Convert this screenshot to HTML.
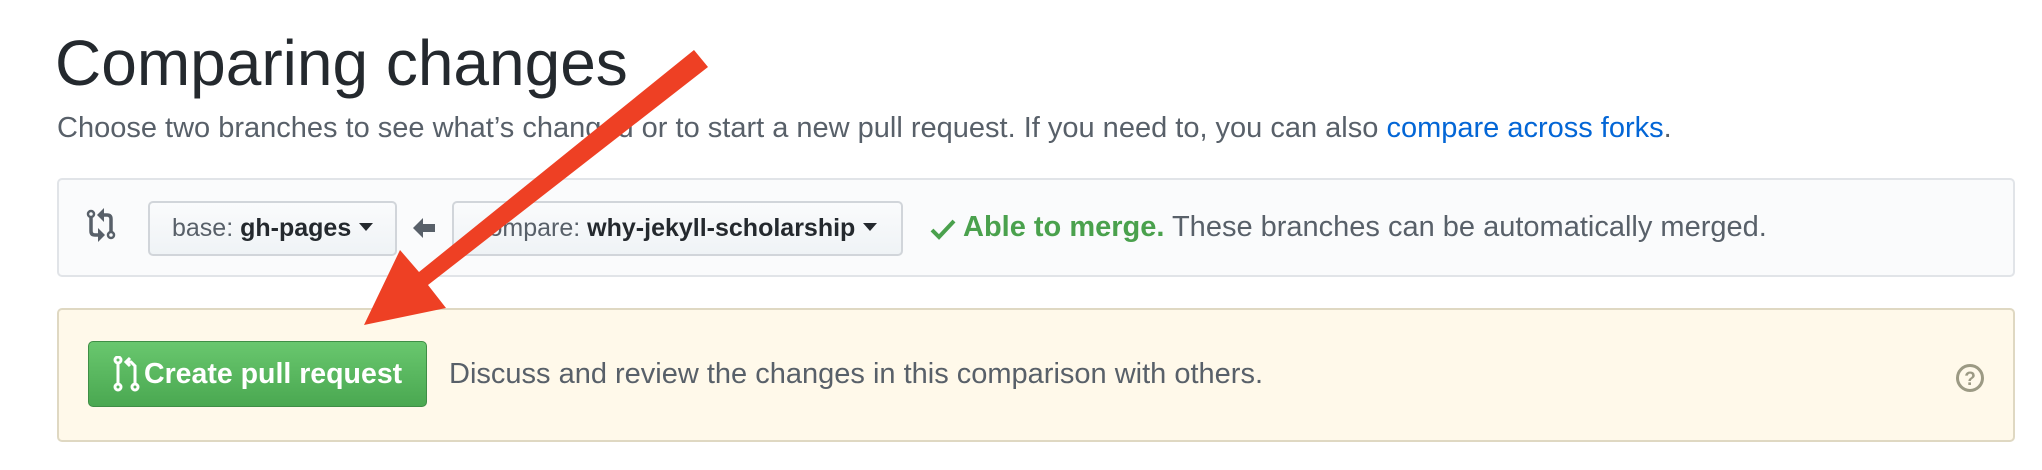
<!DOCTYPE html>
<html><head><meta charset="utf-8"><style>
*{margin:0;padding:0;box-sizing:border-box}
body{width:2042px;height:470px;background:#fff;font-family:"Liberation Sans",Arial,sans-serif;position:relative;overflow:hidden;color:#24292e}
.abs{position:absolute;white-space:nowrap}
h1{position:absolute;left:55px;top:25px;font-size:64px;font-weight:400;line-height:76px;color:#24292e}
.sub{left:57px;top:112px;font-size:29px;color:#586069;line-height:32px}
.sub a{color:#0366d6;text-decoration:none}
.box1{position:absolute;left:57px;top:178px;width:1958px;height:99px;background:#fafbfc;border:2px solid #e1e4e8;border-radius:5px}
.btn{position:absolute;top:201px;height:55px;border:2px solid #d1d5da;border-radius:5px;background:linear-gradient(#fafbfc,#eff3f6);font-size:25px;color:#586069;line-height:51px;padding-left:22px}
.btn b{color:#24292e}
.caret{display:inline-block;width:0;height:0;border-left:7px solid transparent;border-right:7px solid transparent;border-top:8px solid #24292e;vertical-align:middle;margin-left:8px;position:relative;top:-2px}
.box2{position:absolute;left:57px;top:308px;width:1958px;height:134px;background:#fff9ea;border:2px solid #dfd8c2;border-radius:5px}
.gbtn{position:absolute;left:88px;top:341px;width:339px;height:66px;border:1px solid #3f8e46;border-radius:5px;background:linear-gradient(#69c76e,#4aa851);color:#fff;font-weight:bold;font-size:28.5px;line-height:64px;padding-left:55px}
</style></head><body>
<h1>Comparing changes</h1>
<div class="abs sub">Choose two branches to see what’s changed or to start a new pull request. If you need to, you can also <a>compare across forks</a>.</div>
<div class="box1"></div>
<svg class="abs" style="left:0;top:0" width="200" height="260" fill="none" stroke="#586069" stroke-width="3.5">
<circle cx="91" cy="214" r="3" stroke-width="2.5"/><path d="M91 217V231Q91 235 95 235H99"/><path d="M98 228L105 235L98 242Z" fill="#586069" stroke="none"/>
<circle cx="111" cy="235" r="3" stroke-width="2.5"/><path d="M111 232V219Q111 215 107 215H103"/><path d="M104 208L97 215L104 222Z" fill="#586069" stroke="none"/></svg>
<div class="btn" style="left:148px;width:249px">base: <b>gh-pages</b><span class="caret"></span></div>
<svg class="abs" style="left:413px;top:217px" width="22" height="22" viewBox="0 0 22 22"><path d="M0 11L10 1v6h12v8H10v6z" fill="#586069"/></svg>
<div class="btn" style="left:452px;width:451px">compare: <b>why-jekyll-scholarship</b><span class="caret"></span></div>
<svg class="abs" style="left:930px;top:218px" width="26" height="22" viewBox="0 0 26 22"><path d="M2 12L9 19L24 3" fill="none" stroke="#4aa14d" stroke-width="4"/></svg>
<div class="abs" style="left:963px;top:210px;font-size:29px;line-height:34px;color:#586069"><span style="color:#4aa14d;font-weight:bold">Able to merge.</span> These branches can be automatically merged.</div>
<div class="box2"></div>
<div class="gbtn">Create pull request</div>
<svg class="abs" style="left:113px;top:356px" width="28" height="36" viewBox="0 0 28 36" fill="none" stroke="#fff" stroke-width="3"><circle cx="5" cy="4" r="3"/><path d="M5 7v20"/><circle cx="5" cy="31" r="3"/><path d="M17 2l-4 4 4 4"/><path d="M13 6h5l4 4v17"/><circle cx="22" cy="31" r="3"/></svg>
<div class="abs" style="left:449px;top:357px;font-size:29px;line-height:34px;color:#586069">Discuss and review the changes in this comparison with others.</div>
<svg class="abs" style="left:1955px;top:363px" width="30" height="30" viewBox="0 0 30 30"><circle cx="15" cy="15" r="12.5" fill="none" stroke="#9c9a84" stroke-width="3"/><text x="15" y="22" font-size="19" font-weight="bold" text-anchor="middle" fill="#9c9a84" font-family="Liberation Sans">?</text></svg>
<svg class="abs" style="left:0;top:0" width="2042" height="470"><path d="M694 50L708 67L428 285L446 308L364 325L400 250L419 272Z" fill="#ee4024"/></svg>
</body></html>
